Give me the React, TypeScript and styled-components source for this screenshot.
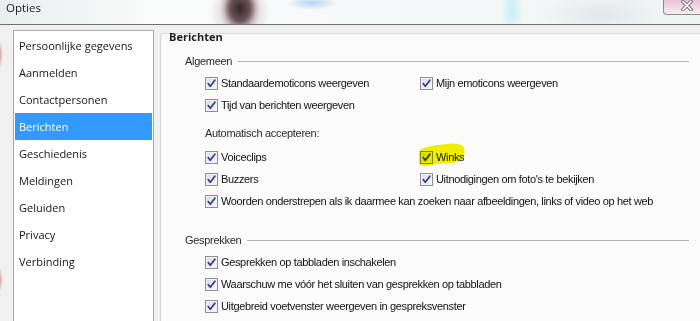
import React from "react";
import styled, { createGlobalStyle } from "styled-components";

const GlobalStyle = createGlobalStyle`
  html, body { margin: 0; padding: 0; background: #f0f0f0; }
  body { width: 700px; height: 321px; overflow: hidden; }
  * { box-sizing: border-box; }
`;

const Window = styled.div`
  width: 700px;
  height: 321px;
  display: flex;
  flex-direction: column;
  overflow: hidden;
  background: #f0f0f0;
`;

const TitleBar = styled.div`
  height: 25px;
  flex: none;
  display: flex;
  align-items: flex-start;
  border-bottom: 1px solid #6f6f6f;
  background:
    radial-gradient(ellipse 20px 26px at 240px 8px, rgba(38, 22, 26, 0.9), rgba(62, 34, 40, 0.7) 50%, rgba(150, 110, 118, 0.3) 80%, rgba(255, 255, 255, 0) 100%),
    radial-gradient(ellipse 30px 34px at 240px 12px, rgba(120, 80, 90, 0.4), rgba(255, 255, 255, 0)),
    radial-gradient(ellipse 26px 7px at 312px 3px, rgba(150, 195, 240, 0.7), rgba(255, 255, 255, 0)),
    radial-gradient(ellipse 12px 24px at 512px 10px, rgba(150, 230, 240, 0.5), rgba(255, 255, 255, 0)),
    radial-gradient(ellipse 60px 20px at 600px 14px, rgba(215, 222, 224, 0.6), rgba(255, 255, 255, 0)),
    linear-gradient(to right, #e9eeef 0, #fafbfb 22%, #f6f9fa 55%, #eef4f4 100%);
`;

const Title = styled.span`
  padding-left: 6px;
  line-height: 22px;
  font: 11.5px "Open Sans", "Noto Sans", sans-serif;
  color: #1a1a1a;
`;

const CloseButton = styled.div`
  margin-left: auto;
  width: 37px;
  height: 15px;
  border-left: 1px solid #8a8a8a;
  border-bottom: 1px solid #8a8a8a;
  border-bottom-left-radius: 4px;
  background: linear-gradient(#e7c2d6, #f1dde7 60%, #f7eef3);
  display: flex;
  justify-content: flex-end;
  align-items: flex-start;
  padding: 0 7px 0 0;
`;

const Body = styled.div`
  flex: 1;
  min-height: 0;
  display: flex;
  gap: 6px;
  padding: 5px 0 0 13px;
  background:
    radial-gradient(ellipse 3px 14px at 0 30px, rgba(205, 70, 82, 0.5), rgba(240, 240, 240, 0)),
    radial-gradient(ellipse 3px 12px at 0 255px, rgba(205, 70, 82, 0.5), rgba(240, 240, 240, 0)),
    #f0f0f0;
`;

const Sidebar = styled.ul`
  width: 141px;
  flex: none;
  margin: 0;
  padding: 1px 0 0;
  list-style: none;
  background: #fff;
  border: 1px solid #a8a8a8;
  border-bottom: none;
`;

const NavItem = styled.li<{ $active?: boolean }>`
  height: 27px;
  margin: 0 1px;
  padding-left: 4px;
  display: flex;
  align-items: center;
  font: 11px "Open Sans", "Noto Sans", sans-serif;
  color: ${(p) => (p.$active ? "#fff" : "#141414")};
  background: ${(p) => (p.$active ? "#3399ff" : "transparent")};
`;

const Panel = styled.section`
  flex: 1;
  margin-top: 3px;
  display: flex;
  flex-direction: column;
  background: #fbfbfb;
  border-top: 1px solid #dadada;
  border-left: 1px solid #d4d4d4;
  border-top-left-radius: 4px;
`;

const PanelHeader = styled.h2`
  margin: -5px 0 0 8px;
  height: 16px;
  line-height: 16px;
  font: bold 11px "Open Sans", "Noto Sans", sans-serif;
  color: #1e1e1e;
`;

const GroupTitle = styled.div<{ $gap: number }>`
  margin-top: ${(p) => p.$gap}px;
  height: 16px;
  display: flex;
  align-items: center;
  gap: 6px;
  padding: 0 11px 0 24px;
  font: 11px "Liberation Sans", Arial, sans-serif;
  letter-spacing: -0.3px;
  color: #2a2a2a;

  &::after {
    content: "";
    flex: 1;
    height: 1px;
    background: #b4b4b4;
  }
`;

const SubTitle = styled.div`
  margin-top: 11px;
  height: 16px;
  line-height: 16px;
  padding-left: 44px;
  font: 11px "Liberation Sans", Arial, sans-serif;
  letter-spacing: -0.3px;
  color: #2a2a2a;
`;

const Options = styled.div`
  margin-top: 3px;
  padding-left: 44px;
  display: grid;
  grid-template-columns: 215px 1fr;
  grid-auto-rows: 22px;
`;

const Cell = styled.label<{ $wide?: boolean }>`
  position: relative;
  display: flex;
  align-items: center;
  gap: 3px;
  grid-column: ${(p) => (p.$wide ? "1 / span 2" : "auto")};
  font: 11px "Liberation Sans", Arial, sans-serif;
  letter-spacing: -0.35px;
  color: #111;
  white-space: nowrap;
`;

const Box = styled.span`
  width: 13px;
  height: 13px;
  flex: none;
  border: 1px solid #8e8f8f;
  background: linear-gradient(135deg, #d6dae2 0%, #e9ecf1 55%, #f8f9fa 100%);
  box-shadow: inset 0 0 0 1px #f4f4f4;
  display: flex;
  align-items: center;
  justify-content: center;
`;

const Highlight = styled.svg`
  position: absolute;
  left: -2px;
  top: -3px;
  width: 47px;
  height: 23px;
  mix-blend-mode: multiply;
  pointer-events: none;
`;

const Check = () => (
  <svg width="11" height="11" viewBox="0 0 11 11">
    <path d="M2.2 5.6 L4.3 8.3 L8.9 2.2" fill="none" stroke="#2b3f86" strokeWidth="1.7" strokeLinecap="round" strokeLinejoin="round" />
  </svg>
);

const Option = ({ label, wide, marked }: { label: string; wide?: boolean; marked?: boolean }) => (
  <Cell $wide={wide}>
    <Box>
      <Check />
    </Box>
    {label}
    {marked && (
      <Highlight viewBox="0 0 47 23">
        <path
          d="M1 21.5 L1.2 8.5 Q4 4 16 2.6 L33 0.6 Q45 0.3 46.5 6 L46 15 Q41 20 28 20.5 L17 20.8 Q15 22.8 8 23 Z"
          fill="#f4f200"
        />
      </Highlight>
    )}
  </Cell>
);

const CloseIcon = () => (
  <svg width="12" height="11" viewBox="0 0 12 11">
    <path d="M2 1.5 L10 9.5 M10 1.5 L2 9.5" stroke="#6d6d6d" strokeWidth="3.4" strokeLinecap="square" />
    <path d="M2 1.5 L10 9.5 M10 1.5 L2 9.5" stroke="#ffffff" strokeWidth="1.6" strokeLinecap="square" />
  </svg>
);

const navItems = [
  "Persoonlijke gegevens",
  "Aanmelden",
  "Contactpersonen",
  "Berichten",
  "Geschiedenis",
  "Meldingen",
  "Geluiden",
  "Privacy",
  "Verbinding",
];

export default function App() {
  return (
    <Window>
      <GlobalStyle />
      <TitleBar>
        <Title>Opties</Title>
        <CloseButton>
          <CloseIcon />
        </CloseButton>
      </TitleBar>
      <Body>
        <Sidebar>
          {navItems.map((n) => (
            <NavItem key={n} $active={n === "Berichten"}>
              {n}
            </NavItem>
          ))}
        </Sidebar>
        <Panel>
          <PanelHeader>Berichten</PanelHeader>
          <GroupTitle $gap={8}>Algemeen</GroupTitle>
          <Options>
            <Option label="Standaardemoticons weergeven" />
            <Option label="Mijn emoticons weergeven" />
            <Option label="Tijd van berichten weergeven" />
          </Options>
          <SubTitle>Automatisch accepteren:</SubTitle>
          <Options>
            <Option label="Voiceclips" />
            <Option label="Winks" marked />
            <Option label="Buzzers" />
            <Option label="Uitnodigingen om foto's te bekijken" />
            <Option label="Woorden onderstrepen als ik daarmee kan zoeken naar afbeeldingen, links of video op het web" wide />
          </Options>
          <GroupTitle $gap={20}>Gesprekken</GroupTitle>
          <Options>
            <Option label="Gesprekken op tabbladen inschakelen" wide />
            <Option label="Waarschuw me vóór het sluiten van gesprekken op tabbladen" wide />
            <Option label="Uitgebreid voetvenster weergeven in gespreksvenster" wide />
          </Options>
        </Panel>
      </Body>
    </Window>
  );
}
